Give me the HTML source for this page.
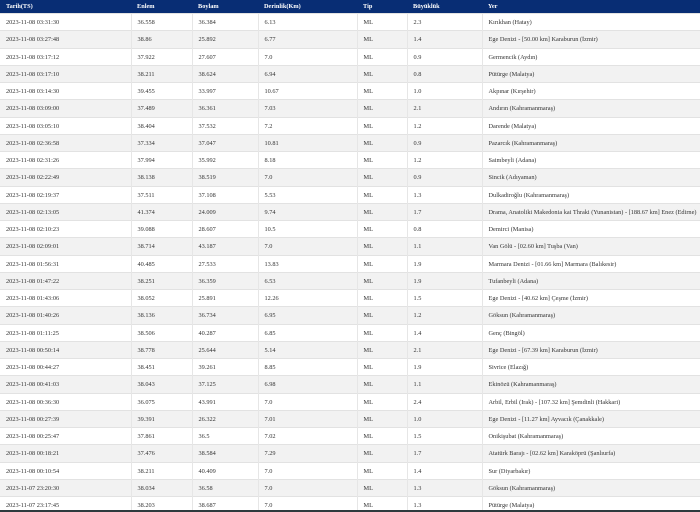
<!DOCTYPE html>
<html><head><meta charset="utf-8"><style>
html,body{margin:0;padding:0;width:700px;height:512px;overflow:hidden;background:#fff;font-family:"Liberation Serif",serif;}
table{border-collapse:collapse;width:700px;table-layout:fixed;font-size:6.3px;color:#333;}
th{background:#082d74;color:#fff;text-align:left;height:13px;padding:0 0 0 6px;font-weight:bold;font-size:6.3px;}
td{height:15.25px;padding:1px 0 0 6px;border-top:1px solid #e2e2e2;border-left:1px solid #e6e6e6;white-space:nowrap;overflow:hidden;}
td:first-child{border-left:none}
tr:nth-child(odd) td{background:#f2f2f2}
.bar{position:absolute;left:0;top:510px;width:700px;height:2px;background:#2e3a3e}
</style></head><body>
<table>
<colgroup><col style="width:131px"><col style="width:61px"><col style="width:66px"><col style="width:99px"><col style="width:50px"><col style="width:75px"><col></colgroup>
<tr><th>Tarih(TS)</th><th>Enlem</th><th>Boylam</th><th>Derinlik(Km)</th><th>Tip</th><th>Büyüklük</th><th>Yer</th></tr>
<tr><td>2023-11-08 03:31:30</td><td>36.558</td><td>36.384</td><td>6.13</td><td>ML</td><td>2.3</td><td>Kırıkhan (Hatay)</td></tr>
<tr><td>2023-11-08 03:27:48</td><td>38.86</td><td>25.892</td><td>6.77</td><td>ML</td><td>1.4</td><td>Ege Denizi - [50.00 km] Karaburun (İzmir)</td></tr>
<tr><td>2023-11-08 03:17:12</td><td>37.922</td><td>27.607</td><td>7.0</td><td>ML</td><td>0.9</td><td>Germencik (Aydın)</td></tr>
<tr><td>2023-11-08 03:17:10</td><td>38.211</td><td>38.624</td><td>6.94</td><td>ML</td><td>0.8</td><td>Pütürge (Malatya)</td></tr>
<tr><td>2023-11-08 03:14:30</td><td>39.455</td><td>33.997</td><td>10.67</td><td>ML</td><td>1.0</td><td>Akpınar (Kırşehir)</td></tr>
<tr><td>2023-11-08 03:09:00</td><td>37.489</td><td>36.361</td><td>7.03</td><td>ML</td><td>2.1</td><td>Andırın (Kahramanmaraş)</td></tr>
<tr><td>2023-11-08 03:05:10</td><td>38.404</td><td>37.532</td><td>7.2</td><td>ML</td><td>1.2</td><td>Darende (Malatya)</td></tr>
<tr><td>2023-11-08 02:36:58</td><td>37.334</td><td>37.047</td><td>10.81</td><td>ML</td><td>0.9</td><td>Pazarcık (Kahramanmaraş)</td></tr>
<tr><td>2023-11-08 02:31:26</td><td>37.994</td><td>35.992</td><td>8.18</td><td>ML</td><td>1.2</td><td>Saimbeyli (Adana)</td></tr>
<tr><td>2023-11-08 02:22:49</td><td>38.138</td><td>38.519</td><td>7.0</td><td>ML</td><td>0.9</td><td>Sincik (Adıyaman)</td></tr>
<tr><td>2023-11-08 02:19:37</td><td>37.511</td><td>37.108</td><td>5.53</td><td>ML</td><td>1.3</td><td>Dulkadiroğlu (Kahramanmaraş)</td></tr>
<tr><td>2023-11-08 02:13:05</td><td>41.374</td><td>24.009</td><td>9.74</td><td>ML</td><td>1.7</td><td>Drama, Anatoliki Makedonia kai Thraki (Yunanistan) - [188.67 km] Enez (Edirne)</td></tr>
<tr><td>2023-11-08 02:10:23</td><td>39.088</td><td>28.607</td><td>10.5</td><td>ML</td><td>0.8</td><td>Demirci (Manisa)</td></tr>
<tr><td>2023-11-08 02:09:01</td><td>38.714</td><td>43.187</td><td>7.0</td><td>ML</td><td>1.1</td><td>Van Gölü - [02.60 km] Tuşba (Van)</td></tr>
<tr><td>2023-11-08 01:56:31</td><td>40.485</td><td>27.533</td><td>13.83</td><td>ML</td><td>1.9</td><td>Marmara Denizi - [01.66 km] Marmara (Balıkesir)</td></tr>
<tr><td>2023-11-08 01:47:22</td><td>38.251</td><td>36.359</td><td>6.53</td><td>ML</td><td>1.9</td><td>Tufanbeyli (Adana)</td></tr>
<tr><td>2023-11-08 01:43:06</td><td>38.052</td><td>25.891</td><td>12.26</td><td>ML</td><td>1.5</td><td>Ege Denizi - [40.62 km] Çeşme (İzmir)</td></tr>
<tr><td>2023-11-08 01:40:26</td><td>38.136</td><td>36.734</td><td>6.95</td><td>ML</td><td>1.2</td><td>Göksun (Kahramanmaraş)</td></tr>
<tr><td>2023-11-08 01:11:25</td><td>38.506</td><td>40.287</td><td>6.85</td><td>ML</td><td>1.4</td><td>Genç (Bingöl)</td></tr>
<tr><td>2023-11-08 00:50:14</td><td>38.778</td><td>25.644</td><td>5.14</td><td>ML</td><td>2.1</td><td>Ege Denizi - [67.39 km] Karaburun (İzmir)</td></tr>
<tr><td>2023-11-08 00:44:27</td><td>38.451</td><td>39.261</td><td>8.85</td><td>ML</td><td>1.9</td><td>Sivrice (Elazığ)</td></tr>
<tr><td>2023-11-08 00:41:03</td><td>38.043</td><td>37.125</td><td>6.98</td><td>ML</td><td>1.1</td><td>Ekinözü (Kahramanmaraş)</td></tr>
<tr><td>2023-11-08 00:36:30</td><td>36.075</td><td>43.991</td><td>7.0</td><td>ML</td><td>2.4</td><td>Arbil, Erbil (Irak) - [107.32 km] Şemdinli (Hakkari)</td></tr>
<tr><td>2023-11-08 00:27:39</td><td>39.391</td><td>26.322</td><td>7.01</td><td>ML</td><td>1.0</td><td>Ege Denizi - [11.27 km] Ayvacık (Çanakkale)</td></tr>
<tr><td>2023-11-08 00:25:47</td><td>37.861</td><td>36.5</td><td>7.02</td><td>ML</td><td>1.5</td><td>Onikişubat (Kahramanmaraş)</td></tr>
<tr><td>2023-11-08 00:18:21</td><td>37.476</td><td>38.584</td><td>7.29</td><td>ML</td><td>1.7</td><td>Atatürk Barajı - [02.62 km] Karaköprü (Şanlıurfa)</td></tr>
<tr><td>2023-11-08 00:10:54</td><td>38.211</td><td>40.409</td><td>7.0</td><td>ML</td><td>1.4</td><td>Sur (Diyarbakır)</td></tr>
<tr><td>2023-11-07 23:20:30</td><td>38.034</td><td>36.58</td><td>7.0</td><td>ML</td><td>1.3</td><td>Göksun (Kahramanmaraş)</td></tr>
<tr><td>2023-11-07 23:17:45</td><td>38.203</td><td>38.687</td><td>7.0</td><td>ML</td><td>1.3</td><td>Pütürge (Malatya)</td></tr>
</table>
<div class="bar"></div>
</body></html>
